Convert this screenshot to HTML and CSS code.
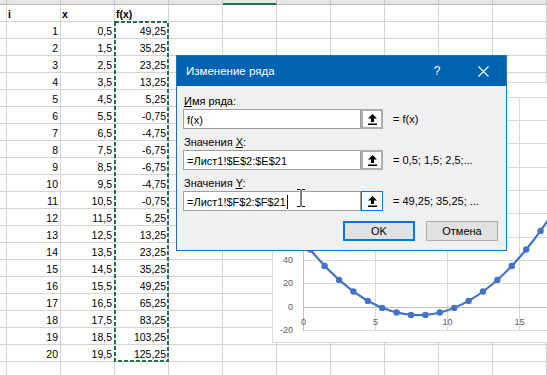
FILE: index.html
```html
<!DOCTYPE html>
<html lang="ru">
<head>
<meta charset="utf-8">
<title>Изменение ряда</title>
<link rel="stylesheet" href="styles.css">
</head>
<body>
<div class="app">
  <div class="colheads">
    <span></span><span></span><span></span><span></span><span></span><span class="active"></span><span></span><span></span><span></span><span></span><span></span>
  </div>
  <div class="sheet">
    <div class="h">i</div><div class="h">x</div><div class="h">f(x)</div>
    <div>1</div><div>0,5</div><div>49,25</div>
    <div>2</div><div>1,5</div><div>35,25</div>
    <div>3</div><div>2,5</div><div>23,25</div>
    <div>4</div><div>3,5</div><div>13,25</div>
    <div>5</div><div>4,5</div><div>5,25</div>
    <div>6</div><div>5,5</div><div>-0,75</div>
    <div>7</div><div>6,5</div><div>-4,75</div>
    <div>8</div><div>7,5</div><div>-6,75</div>
    <div>9</div><div>8,5</div><div>-6,75</div>
    <div>10</div><div>9,5</div><div>-4,75</div>
    <div>11</div><div>10,5</div><div>-0,75</div>
    <div>12</div><div>11,5</div><div>5,25</div>
    <div>13</div><div>12,5</div><div>13,25</div>
    <div>14</div><div>13,5</div><div>23,25</div>
    <div>15</div><div>14,5</div><div>35,25</div>
    <div>16</div><div>15,5</div><div>49,25</div>
    <div>17</div><div>16,5</div><div>65,25</div>
    <div>18</div><div>17,5</div><div>83,25</div>
    <div>19</div><div>18,5</div><div>103,25</div>
    <div>20</div><div>19,5</div><div>125,25</div>
  </div>

  <svg class="marquee" width="55" height="341" viewBox="0 0 55 341">
    <rect x="1" y="1" width="53" height="339" fill="none" stroke="#217346" stroke-width="2" stroke-dasharray="4 2"/>
  </svg>

  <div class="chart">
    <svg width="290" height="261" viewBox="0 0 290 261">
      <rect x="0.5" y="0.5" width="289" height="260" fill="#fff" stroke="#d9d9d9"/>
      <g stroke="#d9d9d9" stroke-width="1">
        <path d="M31 15.5H290M31 38.5H290M31 61.5H290M31 85.5H290M31 108.5H290M31 131.5H290M31 155.5H290M31 178.5H290M31 201.5H290M31 248.5H290"/>
        <path d="M103.5 15V249M175.5 15V249M247.5 15V249"/>
      </g>
      <g stroke="#bfbfbf" stroke-width="1">
        <path d="M31 225.5H290"/>
        <path d="M31.5 15V249"/>
      </g>
      <g class="axis-lbl" text-anchor="end">
        <text x="21" y="181">40</text>
        <text x="21" y="204">20</text>
        <text x="21" y="228">0</text>
        <text x="21" y="251">-20</text>
      </g>
      <g class="axis-lbl" text-anchor="middle">
        <text x="31.5" y="242.5">0</text>
        <text x="103.5" y="242.5">5</text>
        <text x="175.5" y="242.5">10</text>
        <text x="247.5" y="242.5">15</text>
      </g>
      <path d="M38.2 167.54Q175 333.79 311.8 78.88" fill="none" stroke="#4472c4" stroke-width="2.25"/>
      <g fill="#4472c4">
        <circle cx="38.2" cy="167.54" r="3.2"/>
        <circle cx="52.6" cy="183.88" r="3.2"/>
        <circle cx="67" cy="197.88" r="3.2"/>
        <circle cx="81.4" cy="209.54" r="3.2"/>
        <circle cx="95.8" cy="218.88" r="3.2"/>
        <circle cx="110.2" cy="225.88" r="3.2"/>
        <circle cx="124.6" cy="230.54" r="3.2"/>
        <circle cx="139" cy="232.88" r="3.2"/>
        <circle cx="153.4" cy="232.88" r="3.2"/>
        <circle cx="167.8" cy="230.54" r="3.2"/>
        <circle cx="182.2" cy="225.88" r="3.2"/>
        <circle cx="196.6" cy="218.88" r="3.2"/>
        <circle cx="211" cy="209.54" r="3.2"/>
        <circle cx="225.4" cy="197.88" r="3.2"/>
        <circle cx="239.8" cy="183.88" r="3.2"/>
        <circle cx="254.2" cy="167.54" r="3.2"/>
        <circle cx="268.6" cy="148.88" r="3.2"/>
        <circle cx="283" cy="127.54" r="3.2"/>
      </g>
    </svg>
  </div>

  <div class="dialog">
    <div class="titlebar">
      <span class="title">Изменение ряда</span>
      <span class="tb-btn">?</span>
      <span class="tb-btn">
        <svg width="11" height="11" viewBox="0 0 11 11"><path d="M0.5 0.5L10.5 10.5M10.5 0.5L0.5 10.5" stroke="#fff" stroke-width="1.1" fill="none"/></svg>
      </span>
    </div>
    <div class="body">
      <div class="label"><u>И</u>мя ряда:</div>
      <div class="field-row">
        <div class="field">f(x)</div>
        <div class="ref-btn">
          <svg width="9" height="11" viewBox="0 0 9 11"><path d="M4.5 0L9 4.5H6V8H3V4.5H0Z" fill="#000"/><rect x="0" y="9.5" width="9" height="1.5" fill="#000"/></svg>
        </div>
        <div class="result">= f(x)</div>
      </div>
      <div class="label">Значения <u>X</u>:</div>
      <div class="field-row">
        <div class="field">=Лист1!$E$2:$E$21</div>
        <div class="ref-btn">
          <svg width="9" height="11" viewBox="0 0 9 11"><path d="M4.5 0L9 4.5H6V8H3V4.5H0Z" fill="#000"/><rect x="0" y="9.5" width="9" height="1.5" fill="#000"/></svg>
        </div>
        <div class="result">= 0,5; 1,5; 2,5;...</div>
      </div>
      <div class="label">Значения <u>Y</u>:</div>
      <div class="field-row">
        <div class="field">=Лист1!$F$2:$F$21<span class="caret"></span></div>
        <div class="ref-btn focus">
          <svg width="9" height="11" viewBox="0 0 9 11"><path d="M4.5 0L9 4.5H6V8H3V4.5H0Z" fill="#000"/><rect x="0" y="9.5" width="9" height="1.5" fill="#000"/></svg>
        </div>
        <div class="result">= 49,25; 35,25; ...</div>
      </div>
      <div class="buttons">
        <div class="btn default">OK</div>
        <div class="btn">Отмена</div>
      </div>
    </div>
  </div>

  <svg class="ibeam" width="10" height="20" viewBox="0 0 10 20">
    <path d="M1 1.5H4L5 2.5L6 1.5H9M5 2.5V17.5M1 18.5H4L5 17.5L6 18.5H9" stroke="#fff" stroke-width="3" fill="none"/>
    <path d="M1 1.5H4L5 2.5L6 1.5H9M5 2.5V17.5M1 18.5H4L5 17.5L6 18.5H9" stroke="#000" stroke-width="1" fill="none"/>
  </svg>
</div>
</body>
</html>
```
FILE: styles.css
```css
* { box-sizing: border-box; }
html, body { margin: 0; padding: 0; }
body {
  width: 547px;
  height: 375px;
  overflow: hidden;
  background: #fff;
  font-family: "Liberation Sans", Arial, sans-serif;
}
.app {
  position: relative;
  width: 547px;
  height: 375px;
  overflow: hidden;
}

/* column header strip */
.colheads {
  display: grid;
  grid-template-columns: 7px repeat(10, 54px);
  height: 5px;
  background: #e6e6e6;
}
.colheads span {
  border-right: 1px solid #c8c8c8;
  border-bottom: 1px solid #bdbdbd;
}
.colheads .active {
  border-bottom: 2px solid #217346;
}

/* sheet */
.sheet {
  display: grid;
  grid-template-columns: repeat(3, 54px);
  grid-auto-rows: 17px;
  padding-left: 7px;
  height: 370px;
  background-image:
    linear-gradient(to right, transparent 53px, #d4d4d4 53px),
    linear-gradient(to bottom, transparent 16px, #d4d4d4 16px);
  background-size: 54px 100%, 100% 17px;
  background-position: 7px 0, 0 0;
  font-size: 10.5px;
  color: #000;
}
.sheet > div {
  padding: 3px 3px 0 1px;
  line-height: 13px;
  text-align: right;
  white-space: nowrap;
}
.sheet > .h {
  text-align: left;
  font-weight: bold;
}

.marquee {
  position: absolute;
  left: 114px;
  top: 21px;
}

/* chart */
.chart {
  position: absolute;
  left: 272px;
  top: 82px;
}
.chart svg { display: block; }
.axis-lbl {
  font-family: "Liberation Sans", Arial, sans-serif;
  font-size: 9px;
  fill: #595959;
}

/* dialog */
.dialog {
  position: absolute;
  left: 176px;
  top: 55px;
  width: 331px;
  height: 196px;
  border: 1px solid #1a70c4;
  background: #f0f0f0;
  font-size: 11px;
  color: #000;
  display: flex;
  flex-direction: column;
}
.titlebar {
  height: 30px;
  background: #0063b1;
  color: #fff;
  display: flex;
  align-items: center;
}
.title {
  flex: 1;
  padding-left: 9px;
  font-size: 11.5px;
}
.tb-btn {
  width: 46px;
  height: 30px;
  display: flex;
  align-items: center;
  justify-content: center;
  font-size: 12px;
}
.body {
  display: flex;
  flex-direction: column;
  padding: 8px 8px 9px 6px;
}
.label {
  height: 15px;
  line-height: 15px;
  padding-left: 1px;
  white-space: nowrap;
}
.label u { text-underline-offset: 1px; }
.field-row + .label { margin-top: 6px; }
.field-row {
  display: flex;
  align-items: center;
  height: 20px;
}
.field {
  width: 178px;
  height: 20px;
  border: 1px solid #a0a0a0;
  background: #fff;
  padding: 1px 3px 0;
  line-height: 18px;
  white-space: nowrap;
}
.caret {
  display: inline-block;
  width: 1px;
  height: 14px;
  background: #000;
  margin-left: 1px;
  vertical-align: -3px;
}
.ref-btn {
  width: 22px;
  height: 20px;
  border: 2px solid #adadad;
  background: #fff;
  display: flex;
  align-items: center;
  justify-content: center;
}
.ref-btn.focus {
  border: 1px solid #0078d7;
}
.result {
  margin-left: 10px;
  white-space: nowrap;
}
.buttons {
  margin-top: 10px;
  display: flex;
  justify-content: flex-end;
  gap: 11px;
}
.btn {
  width: 72px;
  height: 20px;
  border: 1px solid #adadad;
  background: #e1e1e1;
  display: flex;
  align-items: center;
  justify-content: center;
}
.btn.default {
  border: 2px solid #0078d7;
}

.ibeam {
  position: absolute;
  left: 296px;
  top: 188px;
}
```
